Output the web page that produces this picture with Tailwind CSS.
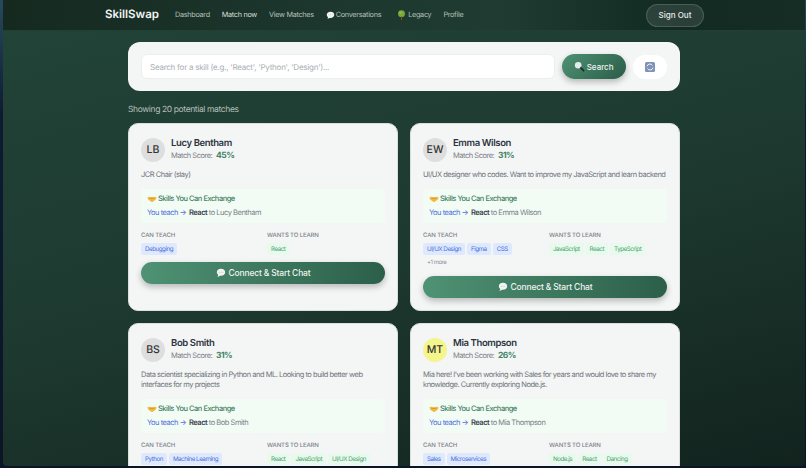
<!DOCTYPE html>
<html lang="en">
<head>
    <meta charset="UTF-8">
    <title>SkillSwap - Match now</title>
    <script src="https://cdn.jsdelivr.net/npm/@tailwindcss/browser@4"></script>
</head>
<body class="h-[468px] overflow-hidden bg-[linear-gradient(180deg,#28495c_0%,#0d1a30_25%,#0c1526_100%)] font-['Inter',sans-serif] text-[#3d4450] [text-rendering:geometricPrecision]">
    <svg class="hidden">
        <symbol id="bubble" viewBox="0 0 12 12"><path d="M6 1C3 1 1 2.800 1 5.100c0 1.300.7 2.400 1.700 3.100-.1.8-.5 1.600-1 2.200 1.100-.1 2.200-.6 3-1.200.4.100.9.100 1.300.100 3 0 5-1.800 5-4.200S9 1 6 1z" fill="#f2f4f3"/><circle cx="3.800" cy="5.100" r=".55" fill="#9aa4a0"/><circle cx="6" cy="5.100" r=".55" fill="#9aa4a0"/><circle cx="8.200" cy="5.100" r=".55" fill="#9aa4a0"/></symbol>
        <symbol id="shake" viewBox="0 0 12 12"><path d="M.4 3.800 3 3.200 6 4l3-.8 2.600.6-1.200 3L7 9.200c-.6.4-1.400.4-2 0L1.600 6.800z" fill="#f0bb45"/><path d="M3.200 5.800C5 5 7 5 8.800 5.800" fill="none" stroke="#c98a1e" stroke-width=".9"/></symbol>
    </svg>

    <div class="ml-[3px] mr-[1px] h-[466px] overflow-hidden rounded-b-[4px] bg-[linear-gradient(165deg,#224438_0%,#1e3a30_50%,#12231e_100%)]">
        <!-- nav -->
        <nav class="h-[31px] bg-[linear-gradient(90deg,#15291f_0%,#1d372e_40%,#1f3b32_62%,#122a21_85%,#152d25_100%)] border-b border-[#213f33] flex items-center pl-[102px] pr-[101px]">
            <span class="text-[#f3f5f4] text-[11.500px] font-semibold w-[70px]">SkillSwap</span>
            <div class="flex items-center gap-[12px] text-[7.250px] tracking-[-0.04em] text-[#b4c0ba]">
                <a>Dashboard</a>
                <a class="text-[#d6ded9]">Match now</a>
                <a>View Matches</a>
                <a class="flex items-center gap-[1px]"><svg class="w-[9px] h-[9px]"><use href="#bubble"/></svg>Conversations</a>
                <a class="ml-[4px] flex items-center gap-[2px]">
                    <svg class="w-[9px] h-[10px]" viewBox="0 0 10 11"><circle cx="5" cy="4" r="3.800" fill="#7da83a"/><circle cx="3.800" cy="3" r="1.500" fill="#93bb50"/><rect x="4.400" y="7" width="1.200" height="4" fill="#6b5a2d"/></svg>
                    Legacy
                </a>
                <a>Profile</a>
            </div>
            <button class="ml-auto h-[23px] w-[58px] rounded-full bg-white/10 border border-white/15 text-[#e8ecea] text-[8px] font-medium">Sign Out</button>
        </nav>

        <main class="w-[552px] ml-[125px]">
            <!-- search -->
            <div class="mt-[11px] h-[49px] rounded-[12px] bg-[#f4f5f5] flex items-center pl-[13px] pr-[13px]">
                <div class="w-[415px] h-[25px] rounded-[6px] bg-white border border-[#eceeed] flex items-center pl-[8px] text-[8px] tracking-[-0.03em] text-[#a9aeb3]">Search for a skill (e.g., 'React', 'Python', 'Design')...</div>
                <button class="ml-[7px] w-[64px] h-[25px] rounded-full bg-[linear-gradient(135deg,#4f9274,#2a5c48)] shadow-[0_3px_6px_rgba(0,0,0,0.25)] flex items-center justify-center gap-[2px] pr-[1px] text-[8px] font-medium text-[#eef3f0]">
                    <svg class="w-[11px] h-[11px]" viewBox="0 0 10 10"><circle cx="3.800" cy="3.800" r="3" fill="#e3ebec"/><path d="M5.800 5.800l3.400 3.400" stroke="#222" stroke-width="1.300"/></svg>
                    Search
                </button>
                <button class="ml-[7px] w-[34px] h-[24px] rounded-full bg-white flex items-center justify-center">
                    <svg class="w-[10px] h-[10px]" viewBox="0 0 10 10"><rect width="10" height="10" rx="1.500" fill="#7f92b8"/><path d="M2 4.300A3 3 0 0 1 7.500 3.500M8 5.700A3 3 0 0 1 2.500 6.500" fill="none" stroke="#fff" stroke-width=".9"/></svg>
                </button>
            </div>

            <p class="mt-[14px] text-[8.500px] leading-[11px] tracking-[-0.045em] text-[#b3bfb9]">Showing 20 potential matches</p>

            <!-- matches -->
            <div class="mt-[7px] grid grid-cols-[270px_270px] gap-x-[12px] gap-y-[12px] tracking-[-0.03em]">
                <!-- Lucy -->
                <div class="h-[188px] rounded-[10px] bg-[#f4f5f5] border border-[#d9dfdc] px-[12px] pt-[13px]">
                    <div class="flex items-center gap-[6px]">
                        <div class="w-[24px] h-[24px] rounded-full bg-[#dedede] flex items-center justify-center text-[10.500px] tracking-normal font-medium text-[#333]">LB</div>
                        <div>
                            <div class="text-[9.500px] leading-[13px] tracking-[-0.04em] font-semibold text-[#2c3440]">Lucy Bentham</div>
                            <div class="text-[7.500px] leading-[12px] text-[#7c8289]">Match Score: <span class="ml-[2px] text-[8.500px] font-bold text-[#3f8468]">45%</span></div>
                        </div>
                    </div>
                    <p class="mt-[8px] text-[7.500px] leading-[10px] text-[#6f757c]">JCR Chair (slay)</p>
                    <div class="mt-[9px] h-[34px] rounded-[4px] bg-[#f2fcf5] pl-[6px] pt-[4px]">
                        <div class="flex items-center gap-[1px] text-[7.500px] leading-[11px] font-medium text-[#3f7d60]"><svg class="w-[10px] h-[10px]"><use href="#shake"/></svg>Skills You Can Exchange</div>
                        <div class="mt-[2.500px] text-[7.500px] leading-[11px] text-[#7c8289]"><span class="text-[#4f6fe0]">You teach →</span> <b class="ml-[1px] font-semibold text-[#3d4450]">React</b> to Lucy Bentham</div>
                    </div>
                    <div class="mt-[7.500px] grid grid-cols-2 gap-x-[8px]">
                        <div>
                            <div class="text-[6px] leading-[9px] tracking-[-0.02em] font-medium text-[#7c8289]">CAN TEACH</div>
                            <div class="mt-[3px] flex gap-[2px]"><span class="px-[4px] h-[12px] leading-[12px] rounded-[2px] text-[6.250px] bg-[#dfe9fd] text-[#4a6fdc]">Debugging</span></div>
                        </div>
                        <div>
                            <div class="text-[6px] leading-[9px] tracking-[-0.02em] font-medium text-[#7c8289]">WANTS TO LEARN</div>
                            <div class="mt-[3px] flex gap-[2px]"><span class="px-[4px] h-[12px] leading-[12px] rounded-[2px] text-[6.250px] bg-[#e8f9ee] text-[#4aa56d]">React</span></div>
                        </div>
                    </div>
                    <button class="mt-[7.500px] w-full h-[22px] rounded-full bg-[linear-gradient(90deg,#4f9274,#2c5f4a)] shadow-[0_3px_6px_rgba(0,0,0,0.25)] flex items-center justify-center gap-[3px] text-[8.500px] tracking-[-0.02em] font-medium text-[#eef3f0]"><svg class="w-[10px] h-[10px]"><use href="#bubble"/></svg>Connect &amp; Start Chat</button>
                </div>
                <!-- Emma -->
                <div class="h-[188px] rounded-[10px] bg-[#f4f5f5] border border-[#d9dfdc] px-[12px] pt-[13px]">
                    <div class="flex items-center gap-[6px]">
                        <div class="w-[24px] h-[24px] rounded-full bg-[#dedede] flex items-center justify-center text-[10.500px] tracking-normal font-medium text-[#333]">EW</div>
                        <div>
                            <div class="text-[9.500px] leading-[13px] tracking-[-0.04em] font-semibold text-[#2c3440]">Emma Wilson</div>
                            <div class="text-[7.500px] leading-[12px] text-[#7c8289]">Match Score: <span class="ml-[2px] text-[8.500px] font-bold text-[#3f8468]">31%</span></div>
                        </div>
                    </div>
                    <p class="mt-[8px] text-[7.500px] leading-[10px] text-[#6f757c]">UI/UX designer who codes. Want to improve my JavaScript and learn backend</p>
                    <div class="mt-[9px] h-[34px] rounded-[4px] bg-[#f2fcf5] pl-[6px] pt-[4px]">
                        <div class="flex items-center gap-[1px] text-[7.500px] leading-[11px] font-medium text-[#3f7d60]"><svg class="w-[10px] h-[10px]"><use href="#shake"/></svg>Skills You Can Exchange</div>
                        <div class="mt-[2.500px] text-[7.500px] leading-[11px] text-[#7c8289]"><span class="text-[#4f6fe0]">You teach →</span> <b class="ml-[1px] font-semibold text-[#3d4450]">React</b> to Emma Wilson</div>
                    </div>
                    <div class="mt-[7.500px] grid grid-cols-2 gap-x-[8px]">
                        <div>
                            <div class="text-[6px] leading-[9px] tracking-[-0.02em] font-medium text-[#7c8289]">CAN TEACH</div>
                            <div class="mt-[3px] flex gap-[2px]">
                                <span class="px-[4px] h-[12px] leading-[12px] rounded-[2px] text-[6.250px] bg-[#dfe9fd] text-[#4a6fdc]">UI/UX Design</span>
                                <span class="px-[4px] h-[12px] leading-[12px] rounded-[2px] text-[6.250px] bg-[#dfe9fd] text-[#4a6fdc]">Figma</span>
                                <span class="px-[4px] h-[12px] leading-[12px] rounded-[2px] text-[6.250px] bg-[#dfe9fd] text-[#4a6fdc]">CSS</span>
                            </div>
                            <div class="mt-[2px] pl-[4px] text-[6px] leading-[12px] text-[#8a9096]">+1 more</div>
                        </div>
                        <div>
                            <div class="text-[6px] leading-[9px] tracking-[-0.02em] font-medium text-[#7c8289]">WANTS TO LEARN</div>
                            <div class="mt-[3px] flex gap-[2px]">
                                <span class="px-[4px] h-[12px] leading-[12px] rounded-[2px] text-[6.250px] bg-[#e8f9ee] text-[#4aa56d]">JavaScript</span>
                                <span class="px-[4px] h-[12px] leading-[12px] rounded-[2px] text-[6.250px] bg-[#e8f9ee] text-[#4aa56d]">React</span>
                                <span class="px-[4px] h-[12px] leading-[12px] rounded-[2px] text-[6.250px] bg-[#e8f9ee] text-[#4aa56d]">TypeScript</span>
                            </div>
                        </div>
                    </div>
                    <button class="mt-[7.500px] w-full h-[22px] rounded-full bg-[linear-gradient(90deg,#4f9274,#2c5f4a)] shadow-[0_3px_6px_rgba(0,0,0,0.25)] flex items-center justify-center gap-[3px] text-[8.500px] tracking-[-0.02em] font-medium text-[#eef3f0]"><svg class="w-[10px] h-[10px]"><use href="#bubble"/></svg>Connect &amp; Start Chat</button>
                </div>
                <!-- Bob -->
                <div class="h-[188px] rounded-[10px] bg-[#f4f5f5] border border-[#d9dfdc] px-[12px] pt-[13px]">
                    <div class="flex items-center gap-[6px]">
                        <div class="w-[24px] h-[24px] rounded-full bg-[#dedede] flex items-center justify-center text-[10.500px] tracking-normal font-medium text-[#333]">BS</div>
                        <div>
                            <div class="text-[9.500px] leading-[13px] tracking-[-0.04em] font-semibold text-[#2c3440]">Bob Smith</div>
                            <div class="text-[7.500px] leading-[12px] text-[#7c8289]">Match Score: <span class="ml-[2px] text-[8.500px] font-bold text-[#3f8468]">31%</span></div>
                        </div>
                    </div>
                    <p class="mt-[8px] text-[7.500px] leading-[10px] text-[#6f757c]">Data scientist specializing in Python and ML. Looking to build better web interfaces for my projects</p>
                    <div class="mt-[9px] h-[34px] rounded-[4px] bg-[#f2fcf5] pl-[6px] pt-[4px]">
                        <div class="flex items-center gap-[1px] text-[7.500px] leading-[11px] font-medium text-[#3f7d60]"><svg class="w-[10px] h-[10px]"><use href="#shake"/></svg>Skills You Can Exchange</div>
                        <div class="mt-[2.500px] text-[7.500px] leading-[11px] text-[#7c8289]"><span class="text-[#4f6fe0]">You teach →</span> <b class="ml-[1px] font-semibold text-[#3d4450]">React</b> to Bob Smith</div>
                    </div>
                    <div class="mt-[7.500px] grid grid-cols-2 gap-x-[8px]">
                        <div>
                            <div class="text-[6px] leading-[9px] tracking-[-0.02em] font-medium text-[#7c8289]">CAN TEACH</div>
                            <div class="mt-[3px] flex gap-[2px]">
                                <span class="px-[4px] h-[12px] leading-[12px] rounded-[2px] text-[6.250px] bg-[#dfe9fd] text-[#4a6fdc]">Python</span>
                                <span class="px-[4px] h-[12px] leading-[12px] rounded-[2px] text-[6.250px] bg-[#dfe9fd] text-[#4a6fdc]">Machine Learning</span>
                            </div>
                        </div>
                        <div>
                            <div class="text-[6px] leading-[9px] tracking-[-0.02em] font-medium text-[#7c8289]">WANTS TO LEARN</div>
                            <div class="mt-[3px] flex gap-[2px]">
                                <span class="px-[4px] h-[12px] leading-[12px] rounded-[2px] text-[6.250px] bg-[#e8f9ee] text-[#4aa56d]">React</span>
                                <span class="px-[4px] h-[12px] leading-[12px] rounded-[2px] text-[6.250px] bg-[#e8f9ee] text-[#4aa56d]">JavaScript</span>
                                <span class="px-[4px] h-[12px] leading-[12px] rounded-[2px] text-[6.250px] bg-[#e8f9ee] text-[#4aa56d]">UI/UX Design</span>
                            </div>
                        </div>
                    </div>
                </div>
                <!-- Mia -->
                <div class="h-[188px] rounded-[10px] bg-[#f4f5f5] border border-[#d9dfdc] px-[12px] pt-[13px]">
                    <div class="flex items-center gap-[6px]">
                        <div class="w-[24px] h-[24px] rounded-full bg-[#f4f58a] flex items-center justify-center text-[10.500px] tracking-normal font-medium text-[#333]">MT</div>
                        <div>
                            <div class="text-[9.500px] leading-[13px] tracking-[-0.04em] font-semibold text-[#2c3440]">Mia Thompson</div>
                            <div class="text-[7.500px] leading-[12px] text-[#7c8289]">Match Score: <span class="ml-[2px] text-[8.500px] font-bold text-[#3f8468]">26%</span></div>
                        </div>
                    </div>
                    <p class="mt-[8px] text-[7.500px] leading-[10px] text-[#6f757c]">Mia here! I've been working with Sales for years and would love to share my knowledge. Currently exploring Node.js.</p>
                    <div class="mt-[9px] h-[34px] rounded-[4px] bg-[#f2fcf5] pl-[6px] pt-[4px]">
                        <div class="flex items-center gap-[1px] text-[7.500px] leading-[11px] font-medium text-[#3f7d60]"><svg class="w-[10px] h-[10px]"><use href="#shake"/></svg>Skills You Can Exchange</div>
                        <div class="mt-[2.500px] text-[7.500px] leading-[11px] text-[#7c8289]"><span class="text-[#4f6fe0]">You teach →</span> <b class="ml-[1px] font-semibold text-[#3d4450]">React</b> to Mia Thompson</div>
                    </div>
                    <div class="mt-[7.500px] grid grid-cols-2 gap-x-[8px]">
                        <div>
                            <div class="text-[6px] leading-[9px] tracking-[-0.02em] font-medium text-[#7c8289]">CAN TEACH</div>
                            <div class="mt-[3px] flex gap-[2px]">
                                <span class="px-[4px] h-[12px] leading-[12px] rounded-[2px] text-[6.250px] bg-[#dfe9fd] text-[#4a6fdc]">Sales</span>
                                <span class="px-[4px] h-[12px] leading-[12px] rounded-[2px] text-[6.250px] bg-[#dfe9fd] text-[#4a6fdc]">Microservices</span>
                            </div>
                        </div>
                        <div>
                            <div class="text-[6px] leading-[9px] tracking-[-0.02em] font-medium text-[#7c8289]">WANTS TO LEARN</div>
                            <div class="mt-[3px] flex gap-[2px]">
                                <span class="px-[4px] h-[12px] leading-[12px] rounded-[2px] text-[6.250px] bg-[#e8f9ee] text-[#4aa56d]">Node.js</span>
                                <span class="px-[4px] h-[12px] leading-[12px] rounded-[2px] text-[6.250px] bg-[#e8f9ee] text-[#4aa56d]">React</span>
                                <span class="px-[4px] h-[12px] leading-[12px] rounded-[2px] text-[6.250px] bg-[#e8f9ee] text-[#4aa56d]">Dancing</span>
                            </div>
                        </div>
                    </div>
                </div>
            </div>
        </main>
    </div>
</body>
</html>
